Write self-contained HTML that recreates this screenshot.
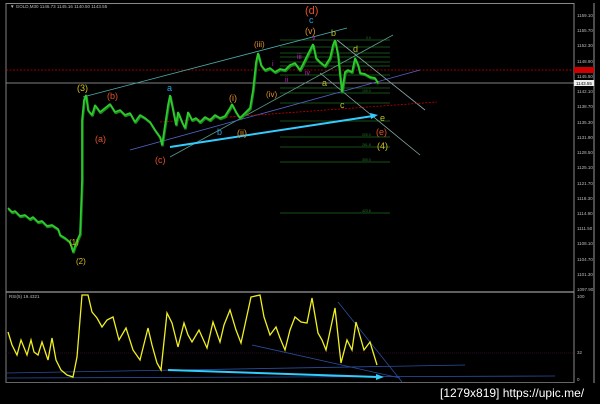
<!DOCTYPE html>
<html><head><meta charset="utf-8"><style>
html,body{margin:0;padding:0;background:#000;width:600px;height:404px;overflow:hidden}
svg{display:block}
text{font-family:"Liberation Sans",sans-serif}
</style></head><body>
<svg width="600" height="404" viewBox="0 0 600 404">
<rect width="600" height="404" fill="#000"/>
<line x1="6" y1="3" x2="6" y2="383" stroke="#555" stroke-width="1.5"/>
<line x1="6" y1="3.5" x2="574" y2="3.5" stroke="#888" stroke-width="1"/>
<line x1="574" y1="3" x2="574" y2="383" stroke="#888" stroke-width="1"/>
<line x1="594" y1="3" x2="594" y2="383" stroke="#666" stroke-width="1.5"/>
<line x1="6" y1="292" x2="574" y2="292" stroke="#999" stroke-width="1.2"/>
<line x1="6" y1="382.5" x2="574" y2="382.5" stroke="#666" stroke-width="1"/>
<text x="10" y="8" fill="#bbb" font-size="4.5">▼ GOLD,M30  1146.73 1145.16 1140.50 1143.55</text>
<text x="9" y="298" fill="#bbb" font-size="4.5">RSI(5) 19.4321</text>
<line x1="6" y1="83" x2="574" y2="83" stroke="#aaa" stroke-width="0.8"/>
<line x1="6" y1="70" x2="574" y2="70" stroke="#c00" stroke-width="0.8" stroke-dasharray="2,1.5"/>
<g fill="#bbb" font-size="4.5">
<text x="577" y="17">1159.10</text><text x="577" y="32">1155.70</text><text x="577" y="47">1152.30</text><text x="577" y="63">1148.90</text><text x="577" y="78">1145.50</text><text x="577" y="93">1142.10</text><text x="577" y="108">1138.70</text><text x="577" y="124">1135.30</text><text x="577" y="139">1131.90</text><text x="577" y="154">1128.50</text><text x="577" y="169">1125.10</text><text x="577" y="185">1121.70</text><text x="577" y="200">1118.30</text><text x="577" y="215">1114.90</text><text x="577" y="230">1111.50</text><text x="577" y="245">1108.10</text><text x="577" y="261">1104.70</text><text x="577" y="276">1101.30</text><text x="577" y="291">1097.90</text>
<text x="577" y="298">100</text><text x="577" y="354">32</text><text x="577" y="381">0</text>
</g>
<rect x="574" y="67" width="20" height="6" fill="#c00"/>
<rect x="574" y="80" width="20" height="6" fill="#eee"/>
<text x="576" y="85" fill="#000" font-size="4.5">1143.55</text>
<g stroke="#1f6b1f" stroke-width="0.8">
<line x1="280" y1="40" x2="390" y2="40"/><line x1="280" y1="47" x2="390" y2="47"/><line x1="280" y1="53" x2="390" y2="53"/><line x1="280" y1="57" x2="390" y2="57"/><line x1="280" y1="62" x2="390" y2="62"/><line x1="280" y1="66" x2="390" y2="66"/><line x1="280" y1="75" x2="390" y2="75"/><line x1="280" y1="88" x2="390" y2="88"/><line x1="280" y1="93" x2="390" y2="93"/><line x1="280" y1="103" x2="390" y2="103"/><line x1="280" y1="121" x2="390" y2="121"/><line x1="280" y1="137" x2="390" y2="137"/><line x1="280" y1="147" x2="390" y2="147"/><line x1="280" y1="162" x2="390" y2="162"/><line x1="280" y1="213" x2="390" y2="213"/>
</g>
<g fill="#2a7a2a" font-size="3.5">
<text x="366" y="39">0.0</text><text x="362" y="92">100.0</text><text x="362" y="136">200.0</text><text x="362" y="146">261.8</text><text x="362" y="161">300.0</text><text x="362" y="212">423.6</text>
</g>
<g fill="none" stroke-width="0.8">
<line x1="83" y1="97" x2="347" y2="28" stroke="#4fb0b0"/>
<line x1="170" y1="157" x2="393" y2="35" stroke="#5a9a8a"/>
<line x1="130" y1="150" x2="420" y2="70" stroke="#5566cc"/>
<line x1="337" y1="40" x2="425" y2="110" stroke="#8aa"/>
<line x1="320" y1="73" x2="420" y2="155" stroke="#8aa"/>
<line x1="160" y1="122" x2="437" y2="102" stroke="#c00" stroke-dasharray="2,1.5"/>
</g>
<line x1="170" y1="147" x2="373" y2="116" stroke="#3cf" stroke-width="2"/>
<polygon points="378,115 370,113 371,119" fill="#3cf"/>
<g fill="none" stroke-linejoin="bevel">
<polyline stroke="#1a8a1a" stroke-width="2.2" transform="translate(0.6,1.2)" points="8,208 12,212 15,211 20,216 25,215 30,219 33,217 38,222 42,221 47,226 52,225 58,229 60,235 65,238 70,242 73,252 76,243 80,234 82,180 82,120 84,100 86,95 88,110 92,115 95,105 100,112 105,108 110,104 115,112 120,110 125,115 130,113 135,122 140,115 145,118 150,122 155,130 160,137 162,145 165,125 168,105 170,95 173,110 176,125 178,112 182,122 185,128 188,112 192,120 196,118 200,122 205,117 210,120 215,115 220,118 225,116 230,108 232,104 236,112 240,118 245,113 250,108 253,90 256,62 258,53 261,65 265,70 270,68 275,72 280,69 285,70 290,65 295,63 300,70 305,60 310,50 313,44 316,58 320,62 325,66 330,58 333,45 335,40 338,55 340,75 342,92 345,72 348,70 352,72 355,58 358,65 360,73 365,74 370,77 375,78 378,83"/>
<polyline stroke="#2ecc2e" stroke-width="1.7" points="8,208 12,212 15,211 20,216 25,215 30,219 33,217 38,222 42,221 47,226 52,225 58,229 60,235 65,238 70,242 73,252 76,243 80,234 82,180 82,120 84,100 86,95 88,110 92,115 95,105 100,112 105,108 110,104 115,112 120,110 125,115 130,113 135,122 140,115 145,118 150,122 155,130 160,137 162,145 165,125 168,105 170,95 173,110 176,125 178,112 182,122 185,128 188,112 192,120 196,118 200,122 205,117 210,120 215,115 220,118 225,116 230,108 232,104 236,112 240,118 245,113 250,108 253,90 256,62 258,53 261,65 265,70 270,68 275,72 280,69 285,70 290,65 295,63 300,70 305,60 310,50 313,44 316,58 320,62 325,66 330,58 333,45 335,40 338,55 340,75 342,92 345,72 348,70 352,72 355,58 358,65 360,73 365,74 370,77 375,78 378,83"/>
</g>
<g font-family="Liberation Serif,serif" font-size="9">
<text x="77" y="91" fill="#d4c01a">(3)</text>
<text x="107" y="99" fill="#e2512a">(b)</text>
<text x="95" y="142" fill="#e2512a">(a)</text>
<text x="155" y="163" fill="#e2512a">(c)</text>
<text x="167" y="91" fill="#2aa0e2">a</text>
<text x="217" y="135" fill="#2aa0e2">b</text>
<text x="229" y="101" fill="#e0902a">(i)</text>
<text x="237" y="136" fill="#e0902a">(ii)</text>
<text x="254" y="47" fill="#e0902a" font-size="8">(iii)</text>
<text x="266" y="97" fill="#e0902a" font-size="8">(iv)</text>
<text x="305" y="34" fill="#e0902a">(v)</text>
<text x="309" y="23" fill="#2aa0e2">c</text>
<text x="305" y="14" fill="#e2512a" font-size="11">(d)</text>
<text x="272" y="66" fill="#c020c0" font-size="7">i</text>
<text x="285" y="82" fill="#c020c0" font-size="7">ii</text>
<text x="297" y="59" fill="#c020c0" font-size="7">iii</text>
<text x="305" y="75" fill="#c020c0" font-size="7">iv</text>
<text x="312" y="40" fill="#c020c0" font-size="7">v</text>
<text x="331" y="36" fill="#b8c030">b</text>
<text x="353" y="52" fill="#b8c030">d</text>
<text x="322" y="86" fill="#b8c030">a</text>
<text x="340" y="108" fill="#b8c030">c</text>
<text x="380" y="121" fill="#b8c030">e</text>
<text x="376" y="135" fill="#e2512a">(e)</text>
<text x="377" y="149" fill="#d4c01a">(4)</text>
<text x="69" y="245" fill="#d4c01a" font-size="8">(1)</text>
<text x="76" y="264" fill="#d4c01a" font-size="8">(2)</text>
</g>
<line x1="6" y1="353" x2="574" y2="353" stroke="#3a1030" stroke-width="0.8" stroke-dasharray="1,1"/>
<g stroke="#2a4fa0" stroke-width="0.8" fill="none">
<line x1="7" y1="373" x2="465" y2="365"/>
<line x1="7" y1="378" x2="555" y2="376"/>
<line x1="252" y1="345" x2="400" y2="378"/>
<line x1="338" y1="302" x2="402" y2="382"/>
</g>
<line x1="168" y1="370" x2="378" y2="377" stroke="#3cf" stroke-width="2"/>
<polygon points="384,377 376,374 376,380" fill="#3cf"/>
<polyline fill="none" stroke="#f0f020" stroke-width="1.3" points="8,332 12,345 17,355 21,340 27,355 31,340 34,352 38,355 42,342 48,360 52,338 56,360 61,370 67,375 73,377 77,357 82,295 88,295 92,312 97,318 102,327 107,320 113,317 119,340 126,328 133,350 140,360 148,328 152,345 157,363 161,370 167,313 172,323 178,347 184,323 188,335 192,342 199,330 207,348 213,322 220,342 224,325 230,310 236,330 241,343 251,297 260,295 264,317 270,335 276,327 280,338 285,350 290,330 295,317 301,322 307,323 312,298 318,333 322,340 326,350 335,308 341,363 347,340 352,350 356,322 364,350 370,342 377,365"/>
<text x="440" y="397" fill="#fff" font-size="12" font-family="Liberation Sans Narrow,Liberation Sans,sans-serif">[1279x819] https://upic.me/</text>
</svg>
</body></html>
